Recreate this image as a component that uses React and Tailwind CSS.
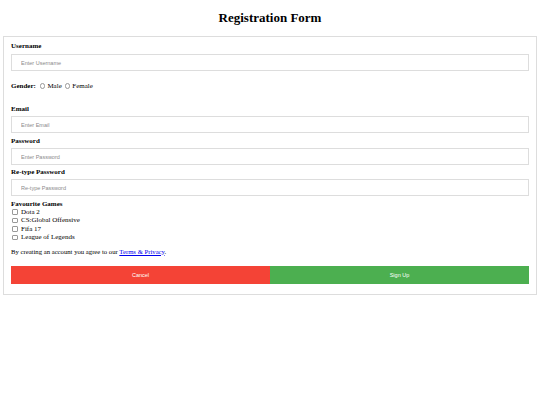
import React from 'react';

const serif = { fontFamily: '"Liberation Serif", serif' };

function Field({ label, placeholder, type = 'text', labelTop }) {
    return (
        <div className={labelTop}>
            <label className="block text-[7px] leading-[8px] font-bold text-black">{label}</label>
            <input
                type={type}
                placeholder={placeholder}
                className="mt-[3px] block w-full h-[17px] border border-[#dddddd] px-[9px] text-[5.5px] outline-none placeholder:text-[#8a8a8a] font-['Liberation_Sans',sans-serif]"
            />
        </div>
    );
}

export default function App() {
    const games = ['Dota 2', 'CS:Global Offensive', 'Fifa 17', 'League of Legends'];

    return (
        <div className="min-h-screen bg-white text-black" style={serif}>
            <h1 className="pt-[10px] mb-[10px] text-center text-[13px] leading-[16px] font-bold">Registration Form</h1>

            <form className="mx-[3px] border border-[#dddddd] px-[7px] pt-[5px] pb-[10px]">
                <div>
                    <label className="block text-[7px] leading-[8px] font-bold">Username</label>
                    <input
                        placeholder="Enter Username"
                        className="mt-[4px] block w-full h-[17px] border border-[#dddddd] px-[9px] text-[5.5px] outline-none placeholder:text-[#8a8a8a] font-['Liberation_Sans',sans-serif]"
                    />
                </div>

                {/* gender */}
                <div className="mt-[11px] flex items-center text-[7px] leading-[8px]">
                    <span className="font-bold mr-[4px]">Gender:</span>
                    <input type="radio" name="gender" className="appearance-none w-[5.5px] h-[5.5px] m-0 mr-[2px] rounded-full border-[0.6px] border-[#999]" />
                    <span className="mr-[3px]">Male</span>
                    <input type="radio" name="gender" className="appearance-none w-[5.5px] h-[5.5px] m-0 mr-[2px] rounded-full border-[0.6px] border-[#999]" />
                    <span>Female</span>
                </div>

                <Field label="Email" placeholder="Enter Email" labelTop="mt-[15px]" />
                <Field label="Password" placeholder="Enter Password" type="password" labelTop="mt-[4px]" />
                <Field label="Re-type Password" placeholder="Re-type Password" type="password" labelTop="mt-[3px]" />

                <div className="mt-[4px]">
                    <div className="text-[7px] leading-[8px] font-bold">Favourite Games</div>
                    {games.map((g) => (
                        <label key={g} className="flex items-center text-[7px] leading-[8.4px]">
                            <input type="checkbox" className="appearance-none w-[5.5px] h-[5.5px] m-0 ml-[1px] mr-[3.5px] rounded-[1px] border-[0.6px] border-[#999]" />
                            {g}
                        </label>
                    ))}
                </div>

                <p className="mt-[6px] text-[6.7px] leading-[8px]">
                    By creating an account you agree to our{' '}
                    <a href="#" className="text-[#0000ee] underline">Terms &amp; Privacy</a>.
                </p>

                <div className="mt-[10px] flex font-['Liberation_Sans',sans-serif]">
                    <button type="button" className="flex-1 h-[18px] bg-[#f44336] text-white text-[5.5px]">Cancel</button>
                    <button type="submit" className="flex-1 h-[18px] bg-[#4caf50] text-white text-[5.5px]">Sign Up</button>
                </div>
            </form>
        </div>
    );
}
